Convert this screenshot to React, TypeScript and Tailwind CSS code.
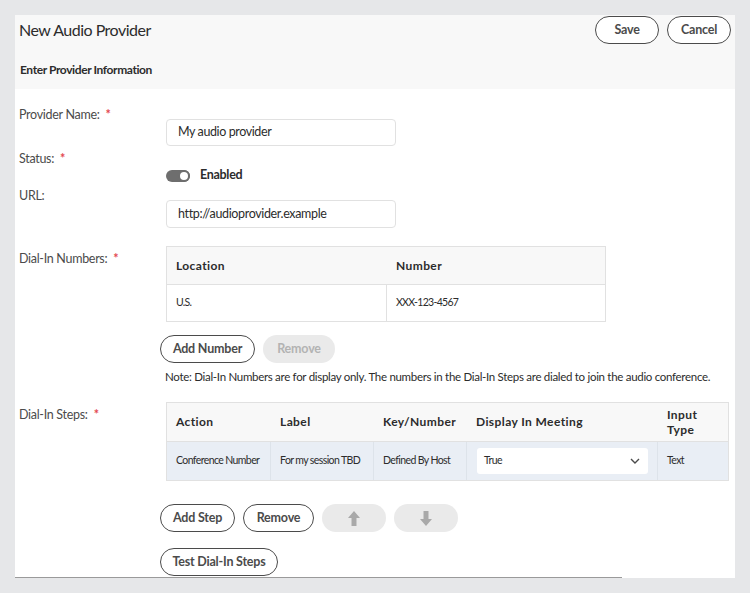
import React from "react";

const F = { fontFamily: "Lato, 'Open Sans', sans-serif" } as React.CSSProperties;

function Star() {
  return <span className="ml-[6px] text-[#e34850] font-bold">*</span>;
}

function Btn({ children, w, disabled }: { children: React.ReactNode; w: string; disabled?: boolean }) {
  return disabled ? (
    <div className={`${w} h-[28px] rounded-full bg-[#eaeaea] text-[#b3b3b3] text-[12.5px] tracking-[-0.2px] font-bold flex items-center justify-center`}>
      {children}
    </div>
  ) : (
    <div className={`${w} h-[28px] rounded-full border-[1.5px] border-[#4b4b4b] text-[#4b4b4b] text-[12.5px] tracking-[-0.2px] font-bold flex items-center justify-center bg-white`}>
      {children}
    </div>
  );
}

function Arrow({ down }: { down?: boolean }) {
  return (
    <svg width="12" height="15" viewBox="0 0 12 15" className={down ? "rotate-180" : ""}>
      <path d="M6 0 L12 7 L8.5 7 L8.5 15 L3.5 15 L3.5 7 L0 7 Z" fill="#a9a9a9" />
    </svg>
  );
}

export default function App() {
  return (
    <div style={F} className="w-[750px] h-[593px] bg-[#e6e7e9] pt-[15px] pl-[15px] overflow-hidden">
      <div className="w-[720px] bg-white">
        {/* header */}
        <div className="h-[74px] bg-[#f8f8f8] pl-[4px] pr-[4px] relative">
          <div className="flex items-start justify-between">
            <div className="text-[16px] tracking-[-0.5px] text-[#2c2c2c] leading-[20px] mt-[5px]">New Audio Provider</div>
            <div className="flex gap-[8px] mt-[1px]">
              <Btn w="w-[64px]">Save</Btn>
              <Btn w="w-[64px]">Cancel</Btn>
            </div>
          </div>
          <div className="text-[12px] tracking-[-0.4px] font-bold text-[#2c2c2c] leading-[16px] mt-[18px] ml-[1px]">Enter Provider Information</div>
        </div>

        {/* body */}
        <div className="pl-[4px] pt-[17px] text-[12.5px] tracking-[-0.3px] text-[#4b4b4b]">
          {/* Provider name */}
          <div className="flex">
            <div className="w-[147px] shrink-0 leading-[18px]">Provider Name:<Star /></div>
            <div className="mt-[13px] w-[230px] h-[27px] border border-[#e1e1e1] rounded-[4px] flex items-center pl-[11px] text-[#2c2c2c] tracking-[-0.4px]">
              My audio provider
            </div>
          </div>
          {/* Status */}
          <div className="flex mt-[4px]">
            <div className="w-[147px] shrink-0 leading-[18px]">Status:<Star /></div>
            <div className="mt-[16px] h-[20px] flex items-center">
              <div className="w-[24px] h-[12px] rounded-full bg-[#6e6e6e] relative">
                <div className="absolute right-0 top-0 w-[12px] h-[12px] rounded-full bg-white border-[2px] border-[#6e6e6e]" />
              </div>
              <span className="ml-[10px] font-bold text-[#2c2c2c] -mt-[1px]">Enabled</span>
            </div>
          </div>
          {/* URL */}
          <div className="flex mt-[1px]">
            <div className="w-[147px] shrink-0 leading-[18px]">URL:</div>
            <div className="mt-[13px] w-[230px] h-[28px] border border-[#e1e1e1] rounded-[4px] flex items-center pl-[11px] text-[#2c2c2c] tracking-[-0.35px]">
              http://audioprovider.example
            </div>
          </div>
          {/* Dial-in numbers */}
          <div className="flex mt-[18px]">
            <div className="w-[147px] shrink-0 leading-[18px] pt-[4px]">Dial-In Numbers:<Star /></div>
            <div>
              <div className="w-[440px] border border-[#e1e1e1]">
                <div className="flex h-[38px] bg-[#f8f8f8] border-b border-[#e1e1e1] text-[12px] font-bold text-[#2c2c2c] tracking-[0.4px]">
                  <div className="w-[220px] pl-[9px] flex items-center">Location</div>
                  <div className="flex-1 pl-[9px] flex items-center">Number</div>
                </div>
                <div className="flex h-[36px] text-[10.5px] text-[#2c2c2c] tracking-[-0.7px]">
                  <div className="w-[220px] pl-[9px] flex items-center border-r border-[#e1e1e1]">U.S.</div>
                  <div className="flex-1 pl-[9px] flex items-center">XXX-123-4567</div>
                </div>
              </div>
              <div className="flex gap-[8px] mt-[13px] -ml-[6px]">
                <Btn w="w-[95px]">Add Number</Btn>
                <Btn w="w-[72px]" disabled>Remove</Btn>
              </div>
              <div className="mt-[6px] -ml-[1px] text-[11.5px] leading-[16px] text-[#2c2c2c] whitespace-nowrap tracking-[-0.3px]">
                Note: Dial-In Numbers are for display only. The numbers in the Dial-In Steps are dialed to join the audio conference.
              </div>
            </div>
          </div>
          {/* Dial-in steps */}
          <div className="flex mt-[17px]">
            <div className="w-[147px] shrink-0 leading-[18px] pt-[4px]">Dial-In Steps:<Star /></div>
            <div>
              <div className="w-[563px] border border-[#e1e1e1]">
                <div className="flex h-[39px] bg-[#f8f8f8] border-b border-[#e1e1e1] text-[12px] font-bold text-[#2c2c2c] tracking-[0.4px]">
                  <div className="w-[104px] pl-[9px] flex items-center">Action</div>
                  <div className="w-[103px] pl-[9px] flex items-center">Label</div>
                  <div className="w-[93px] pl-[9px] flex items-center">Key/Number</div>
                  <div className="w-[191px] pl-[9px] flex items-center">Display In Meeting</div>
                  <div className="flex-1 pl-[9px] flex items-center leading-[15px]">Input<br />Type</div>
                </div>
                <div className="flex h-[38px] bg-[#e9eef5] text-[10.5px] text-[#2c2c2c] tracking-[-0.6px]">
                  <div className="w-[104px] pl-[9px] flex items-center border-r border-[#dde3ea]">Conference Number</div>
                  <div className="w-[103px] pl-[9px] flex items-center border-r border-[#dde3ea]">For my session TBD</div>
                  <div className="w-[93px] pl-[9px] flex items-center border-r border-[#dde3ea]">Defined By Host</div>
                  <div className="w-[191px] pl-[10px] pr-[9px] flex items-center border-r border-[#dde3ea]">
                    <div className="w-[171px] h-[26px] bg-white rounded-[3px] flex items-center justify-between pl-[7px] pr-[8px]">
                      <span>True</span>
                      <svg width="10" height="6" viewBox="0 0 10 6">
                        <path d="M1 1 L5 5 L9 1" fill="none" stroke="#4b4b4b" strokeWidth="1.4" />
                      </svg>
                    </div>
                  </div>
                  <div className="flex-1 pl-[9px] flex items-center">Text</div>
                </div>
              </div>
              <div className="flex gap-[8px] mt-[23px] -ml-[6px]">
                <Btn w="w-[75px]">Add Step</Btn>
                <Btn w="w-[71px]">Remove</Btn>
                <Btn w="w-[64px]" disabled><Arrow /></Btn>
                <Btn w="w-[64px]" disabled><Arrow down /></Btn>
              </div>
              <div className="mt-[16px] -ml-[6px]">
                <Btn w="w-[118px]">Test Dial-In Steps</Btn>
              </div>
            </div>
          </div>
          <div className="h-[1px]" />
        </div>
        <div className="w-[607px] h-px bg-[#9a9a9a]" />
      </div>
    </div>
  );
}
